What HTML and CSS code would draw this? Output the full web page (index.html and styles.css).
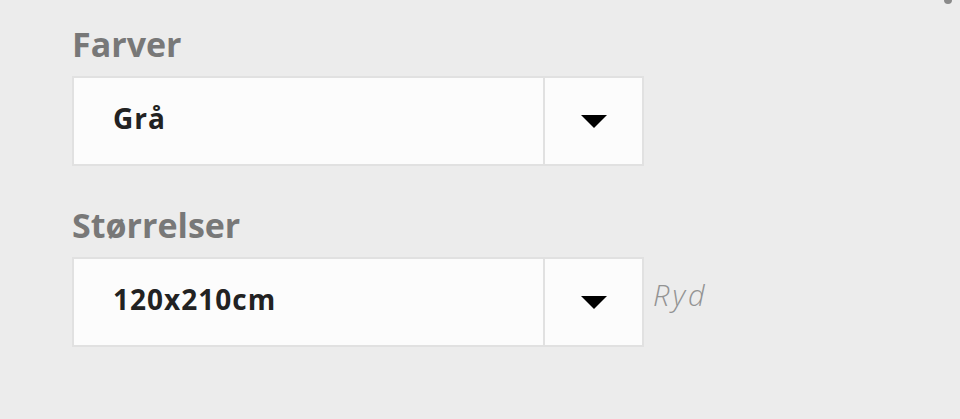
FILE: index.html
```html
<!DOCTYPE html>
<html lang="da">
<head>
<meta charset="utf-8">
<title>Varianter</title>
<link rel="stylesheet" href="styles.css">
</head>
<body>
<span class="corner-dot"></span>
<div class="variants">
  <div class="field">
    <div class="label">Farver</div>
    <div class="row">
      <div class="select">
        <div class="value">Grå</div>
        <div class="btn"><span class="arrow"></span></div>
      </div>
    </div>
  </div>
  <div class="field">
    <div class="label">Størrelser</div>
    <div class="row">
      <div class="select">
        <div class="value">120x210cm</div>
        <div class="btn"><span class="arrow"></span></div>
      </div>
      <a class="reset">Ryd</a>
    </div>
  </div>
</div>
</body>
</html>
```

FILE: styles.css
```css
html, body {
  margin: 0;
  padding: 0;
  background: #ececec;
}
body {
  font-family: "Open Sans", "Liberation Sans", sans-serif;
  position: relative;
  height: 419px;
  overflow: hidden;
}
.corner-dot {
  position: absolute;
  left: 944px;
  top: -4px;
  width: 8px;
  height: 8px;
  border-radius: 50%;
  background: #8a8a8a;
}
.variants {
  padding: 24px 0 0 72px;
  display: flex;
  flex-direction: column;
  gap: 39px;
}
.label {
  font-weight: 700;
  font-size: 34px;
  line-height: 40px;
  color: #787878;
  margin-bottom: 12px;
}
.row {
  display: flex;
  align-items: center;
}
.select {
  display: flex;
  width: 572px;
  height: 90px;
  box-sizing: border-box;
  border: 2px solid #e1e1e1;
  background: #fcfcfc;
}
.value {
  flex: 1;
  display: flex;
  align-items: center;
  padding: 0 0 6px 39px;
  font-weight: 700;
  font-size: 28px;
  letter-spacing: 1px;
  color: #222;
}
.btn {
  width: 97px;
  border-left: 2px solid #e1e1e1;
  display: flex;
  align-items: center;
  justify-content: center;
}
.arrow {
  width: 0;
  height: 0;
  border-left: 13px solid transparent;
  border-right: 13px solid transparent;
  border-top: 13px solid #000;
}
.reset {
  margin-left: 9px;
  font-style: italic;
  font-weight: 300;
  font-size: 29px;
  letter-spacing: 3px;
  color: #939393;
  margin-top: -16px;
}
```
